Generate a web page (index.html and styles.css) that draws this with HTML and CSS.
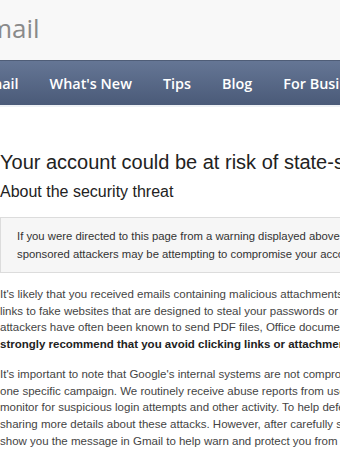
FILE: index.html
```html
<!DOCTYPE html>
<html lang="en">
<head>
  <meta charset="UTF-8">
  <meta name="viewport" content="width=device-width, initial-scale=1.0">
  <title>Gmail - State-sponsored attacks</title>
  <link rel="stylesheet" href="styles.css">
</head>
<body>
  <div class="masthead">
    <div class="logo">Gmail</div>
  </div>
  <ul class="nav">
    <li>Gmail</li>
    <li>What's New</li>
    <li>Tips</li>
    <li>Blog</li>
    <li>For Business</li>
  </ul>

  <div class="content">
    <h1>Your account could be at risk of state-sponsored attacks</h1>
    <h2>About the security threat</h2>
    <div class="notice">
      If you were directed to this page from a warning displayed above your Gmail inbox, we believe state-<br>
      sponsored attackers may be attempting to compromise your account.
    </div>
    <p>
      It's likely that you received emails containing malicious attachments, links to malware downloads, or<br>
      links to fake websites that are designed to steal your passwords or other account information. In the past,<br>
      attackers have often been known to send PDF files, Office documents, and RAR files containing malware. We<br>
      <strong>strongly recommend that you avoid clicking links or attachments in emails from people you don't know.</strong>
    </p>
    <p>
      It's important to note that Google's internal systems are not compromised and that this warning is not related to<br>
      one specific campaign. We routinely receive abuse reports from users and we continuously<br>
      monitor for suspicious login attempts and other activity. To help defend against these attacks, we're not<br>
      sharing more details about these attacks. However, after carefully studying each case, we've decided to<br>
      show you the message in Gmail to help warn and protect you from possible attacks.
    </p>
  </div>
</body>
</html>
```

FILE: styles.css
```css
body {
  margin: 0;
  padding: 0;
  overflow: hidden;
  background: #fff;
  font-family: 'Liberation Sans', Arial, sans-serif;
  color: #444;
}

.masthead {
  height: 60px;
  background: #f8f8f8;
  overflow: hidden;
}

.logo {
  margin-left: -31px;
  padding-top: 10px;
  font-family: 'Open Sans', sans-serif;
  font-size: 26px;
  color: #8a8a8a;
  white-space: nowrap;
}

.nav {
  display: flex;
  gap: 31px;
  margin: 0;
  padding: 0;
  margin-left: -22px;
  height: 44px;
  align-items: center;
  list-style: none;
  background: linear-gradient(to bottom, #657695, #4a5a78);
  border-top: 1px solid #4f5d77;
  border-bottom: 2px solid #eef1f5;
  white-space: nowrap;
}

.nav li {
  font-family: 'Open Sans', sans-serif;
  font-weight: 600;
  font-size: 14.4px;
  color: #fff;
}

.content {
  padding-top: 42px;
  white-space: nowrap;
}

h1 {
  margin: 0;
  font-size: 20px;
  font-weight: normal;
  color: #222;
  line-height: 26px;
}

h2 {
  margin: 6px 0 0;
  font-size: 16px;
  font-weight: normal;
  color: #222;
  line-height: 22px;
}

.notice {
  margin-top: 14px;
  padding: 9px 16px 9px;
  background: #f6f6f6;
  border: 1px solid #dcdcdc;
  border-right: none;
  font-size: 11.3px;
  line-height: 18px;
  color: #333;
}

p {
  margin: 13px 0 0;
  font-size: 11.5px;
  line-height: 16.7px;
  color: #444;
}

p strong {
  color: #222;
}
```
